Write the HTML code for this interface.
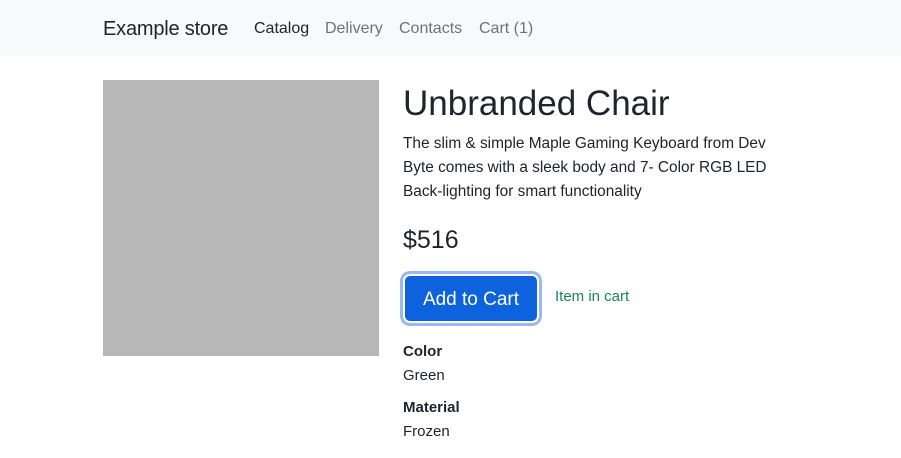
<!DOCTYPE html>
<html><head><meta charset="utf-8"><style>
*{box-sizing:border-box;margin:0;padding:0}
body{width:901px;height:458px;background:#fff;font-family:"Liberation Sans","DejaVu Sans",sans-serif;color:#212529;font-size:16px;position:relative;overflow:hidden}
.nav{position:absolute;left:0;top:0;width:901px;height:56px;background:#f8f9fa}
.brand{position:absolute;left:103px;top:17px;font-size:20px;line-height:24px;color:#212529;letter-spacing:-0.2px}
.links{position:absolute;left:254px;top:18px;font-size:16px;line-height:22px;white-space:nowrap}
.links span{position:absolute;color:rgba(0,0,0,.55)}
.links span.a{color:#212529}
.img{position:absolute;left:103px;top:80px;width:276px;height:276px;background:#b7b7b7}
.t{position:absolute;left:403px;top:82px;font-size:35px;line-height:44px;font-weight:400;white-space:nowrap}
.d{position:absolute;left:403px;top:132px;font-size:15.4px;line-height:24px;white-space:nowrap}
.p{position:absolute;left:403px;top:224px;font-size:25px;line-height:32px}
.btn{position:absolute;left:403px;top:274px;width:136px;height:49px;border-radius:7px;background:#0d62dd;color:#fff;font-size:19px;line-height:47px;text-align:center;border:2px solid #fff;box-shadow:0 0 0 3px #98b9f5}
.ic{position:absolute;left:555px;top:287px;color:#198754;font-size:15px;line-height:20px}
.l{position:absolute;left:403px;font-size:15px;line-height:24px}
b{font-weight:700}
</style></head><body>
<div class="nav"><div class="brand">Example store</div>
<div class="links"><span class="a" style="left:0">Catalog</span><span style="left:71px">Delivery</span><span style="left:145px">Contacts</span><span style="left:225px">Cart (1)</span></div></div>
<div class="img"></div>
<div class="t">Unbranded Chair</div>
<div class="d">The slim &amp; simple Maple Gaming Keyboard from Dev<br>Byte comes with a sleek body and 7- Color RGB LED<br>Back-lighting for smart functionality</div>
<div class="p">$516</div>
<div class="btn">Add to Cart</div>
<div class="ic">Item in cart</div>
<div class="l" style="top:340px"><b>Color</b></div>
<div class="l" style="top:364px">Green</div>
<div class="l" style="top:396px"><b>Material</b></div>
<div class="l" style="top:420px">Frozen</div>
</body></html>
